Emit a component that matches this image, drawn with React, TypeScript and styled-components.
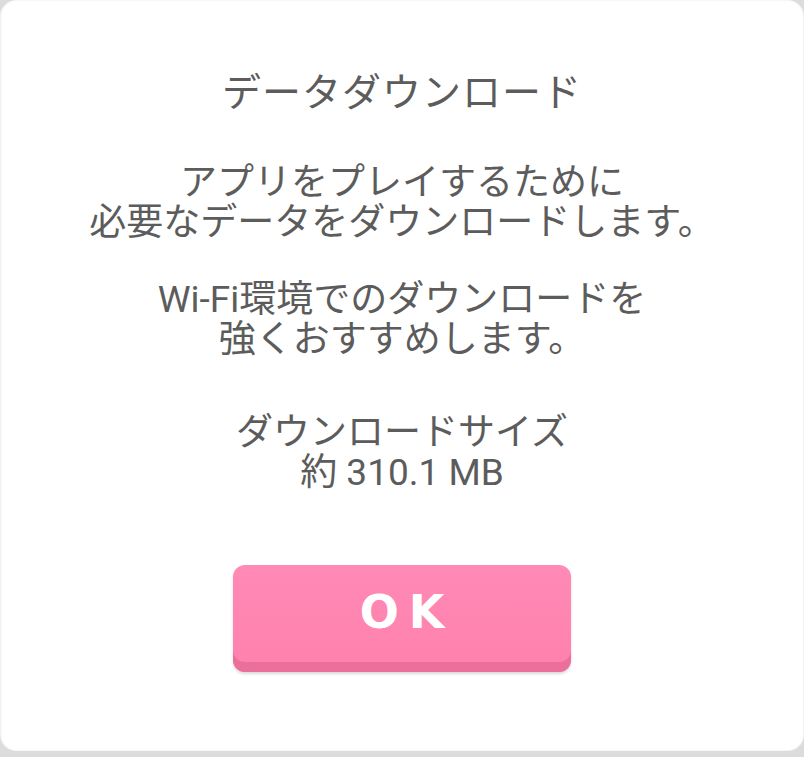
import styled, { createGlobalStyle } from "styled-components";

const GlobalStyle = createGlobalStyle`
    html, body {
        margin: 0;
        padding: 0;
        background: #dcdcdc;
    }
    body {
        font-family: Roboto, "Noto Sans CJK JP", "Noto Sans", sans-serif;
    }
`

const Dialog = styled.div`
    box-sizing: border-box;
    width: 804px;
    height: 751px;
    background: #ffffff;
    border-radius: 16px;
    box-shadow: inset 1px 0 2px rgba(0, 0, 0, 0.08), inset -1px 0 2px rgba(0, 0, 0, 0.06);
    display: flex;
    flex-direction: column;
    align-items: center;
    padding-top: 70px;
    color: #5c5c5c;
`

const Title = styled.h1`
    margin: 0;
    font-size: 39px;
    font-weight: 400;
    line-height: 46px;
    letter-spacing: 1px;
`

const Message = styled.p<{ $gap: number }>`
    margin: ${({ $gap }) => $gap}px 0 0;
    font-size: 37px;
    font-weight: 400;
    line-height: 40px;
    text-align: center;
`

const OkButton = styled.button`
    margin-top: 72px;
    width: 338px;
    height: 107px;
    border: none;
    border-radius: 12px;
    background: linear-gradient(180deg, #ff8ab5 0%, #ff80ad 100%);
    box-shadow: inset 0 -10px 0 #ea6f9a, 0 2px 3px rgba(0, 0, 0, 0.15);
    color: #ffffff;
    font-family: "DejaVu Sans", Verdana, sans-serif;
    font-weight: 700;
    font-size: 46px;
    letter-spacing: 10px;
    padding: 0 0 14px 10px;
    cursor: pointer;
`

/*
 * Download confirmation dialog
 */
function App() {
    return (
        <>
            <GlobalStyle />
            <Dialog>
                <Title>データダウンロード</Title>
                <Message $gap={47}>
                    アプリをプレイするために<br />
                    必要なデータをダウンロードします。
                </Message>
                <Message $gap={37}>
                    Wi-Fi環境でのダウンロードを<br />
                    強くおすすめします。
                </Message>
                <Message $gap={53}>
                    ダウンロードサイズ<br />
                    約 310.1 MB
                </Message>
                <OkButton>OK</OkButton>
            </Dialog>
        </>
    )
}

export default App;
